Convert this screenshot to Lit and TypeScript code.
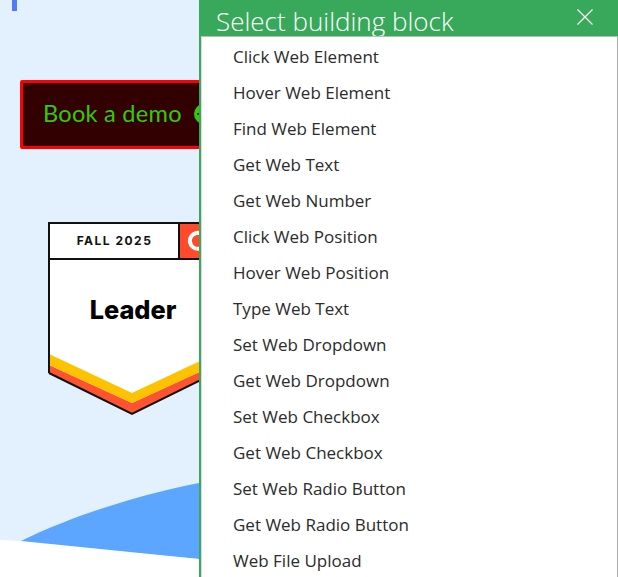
import { LitElement, html, css, svg } from "lit";
import { customElement } from "lit/decorators.js";

const ITEMS = ["Click Web Element","Hover Web Element","Find Web Element","Get Web Text","Get Web Number","Click Web Position","Hover Web Position","Type Web Text","Set Web Dropdown","Get Web Dropdown","Set Web Checkbox","Get Web Checkbox","Set Web Radio Button","Get Web Radio Button","Web File Upload"];

@customElement("app-root")
export class AppRoot extends LitElement {
  static styles = css`
    :host { display: flex; width: 618px; height: 577px; overflow: hidden; font-family: "Open Sans", "Noto Sans", sans-serif; }
    .page { width: 199px; flex: none; height: 577px; position: relative; background: #e3f1fe; overflow: hidden; }
    .page svg.bg { position: absolute; inset: 0; }
    .tick { position: absolute; left: 12px; top: 0; width: 5px; height: 11px; background: #4f7bfb; }
    .demo { position: absolute; left: 20px; top: 80px; width: 210px; height: 69px; box-sizing: border-box; border: 3px solid #f00; border-radius: 2px; background: #300; display: flex; align-items: center; padding: 0 0 1px 20px; gap: 12px; color: #3c0; font: 23.6px/1 "Lato", sans-serif; letter-spacing: 0.25px; }
    .dot { width: 20px; height: 20px; flex: none; }
    .dialog { flex: 1; min-width: 0; height: 577px; display: flex; flex-direction: column; background: #38a85a; padding-left: 2px; box-sizing: border-box; }
    .head { height: 36px; flex: none; display: flex; align-items: flex-start; justify-content: space-between; padding: 9px 25px 0 15px; box-sizing: border-box; color: #fff; font-size: 26px; line-height: 36px; font-weight: 300; }
    .head span { margin-top: -6px; }
    .list { flex: 1; background: #fff; border-top: 1px solid #bbb; border-left: 1px solid #ddd; border-right: 1px solid #a9a9a9; padding: 2px 0 0 31px; margin: 0; list-style: none; color: #2b2b2b; font-size: 17px; }
    .list li { height: 36px; line-height: 36px; white-space: nowrap; }
  `;
  render() {
    return html`
      <div class="page">
        <svg class="bg" width="199" height="577" viewBox="0 0 199 577">
          <path d="M0 541 L21 541 C70 517 130 497 199 483 L199 559 Z" fill="#5ca6ff"/>
          <path d="M0 540 L21 541 L199 559 L199 577 L0 577 Z" fill="#fff"/>
          ${this.badge()}
        </svg>
        <div class="tick"></div>
        <div class="demo">Book a demo<svg class="dot" viewBox="0 0 20 20"><circle cx="10" cy="10" r="10" fill="#3c0"/><path d="M3 10 H14 M10 6 L14 10 L10 14" stroke="#300" stroke-width="1.6" fill="none"/></svg></div>
      </div>
      <div class="dialog">
        <div class="head"><span>Select building block</span>
          <svg width="16" height="16" viewBox="0 0 16 16"><path d="M0.5 0.5 L15.5 15.5 M15.5 0.5 L0.5 15.5" stroke="#fff" stroke-width="1.2" fill="none"/></svg>
        </div>
        <ul class="list">${ITEMS.map(i => html`<li>${i}</li>`)}</ul>
      </div>`;
  }
  badge() {
    return svg`
      <path d="M49 223 H215 V373 L132 414 L49 373 Z" fill="#fff"/>
      <path d="M49 365 L132 403 L215 365 V373 L132 414 L49 373 Z" fill="#ff5230"/>
      <path d="M49 354 L132 393 L215 354 V365 L132 403 L49 365 Z" fill="#fdc300"/>
      <rect x="179" y="223" width="30" height="36" fill="#ff4a2b"/>
      <path d="M202 234 A8 8 0 1 0 204 246" fill="none" stroke="#fff" stroke-width="4"/>
      <path d="M49 259 H215 M179 223 V259" stroke="#111" stroke-width="2" fill="none"/>
      <path d="M49 373 V223 H215 M49 373 L132 414 L215 373" stroke="#111" stroke-width="2" fill="none"/>
      <text x="114.5" y="245" text-anchor="middle" font-family="Inter, sans-serif" font-weight="700" font-size="12" letter-spacing="1.5" fill="#111">FALL 2025</text>
      <text x="133" y="319" text-anchor="middle" font-family="Inter, sans-serif" font-weight="800" font-size="25.3" fill="#000">Leader</text>`;
  }
}
